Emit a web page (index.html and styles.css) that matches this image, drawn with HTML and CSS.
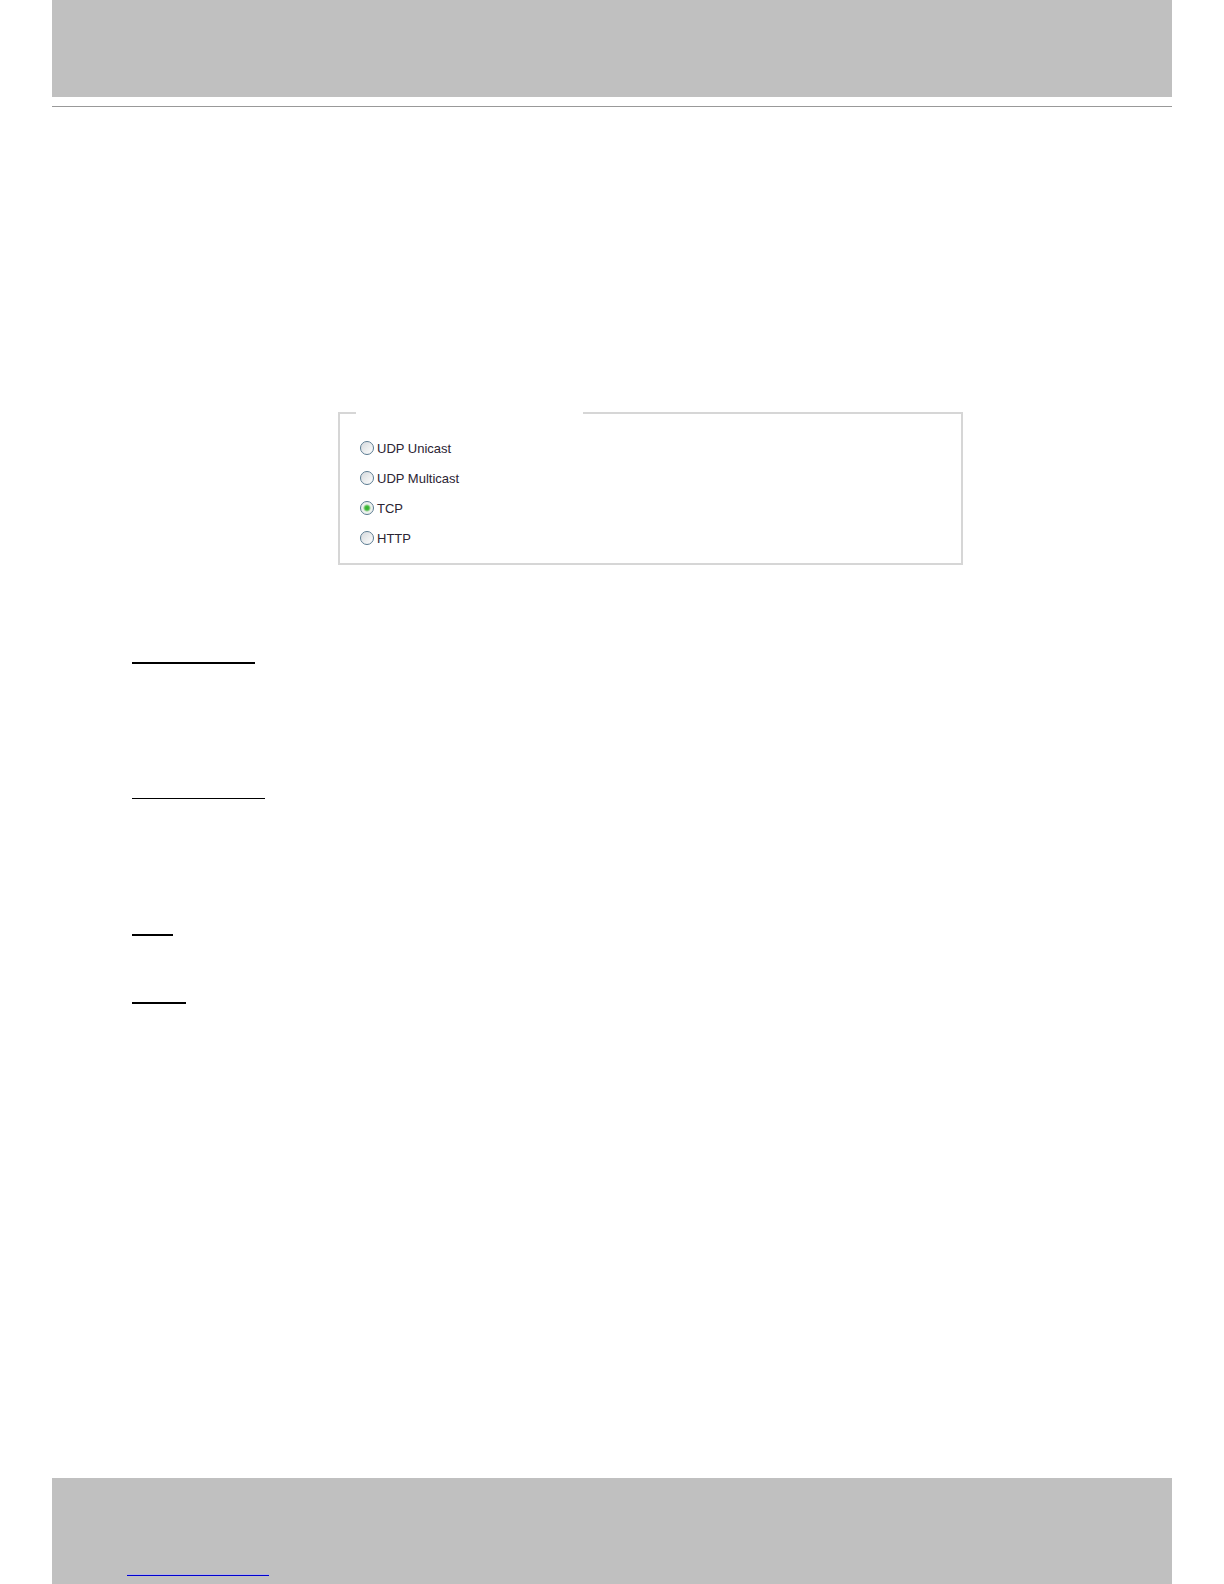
FILE: index.html
```html
<!DOCTYPE html>
<html lang="en">
<head>
<meta charset="utf-8">
<meta name="viewport" content="width=device-width, initial-scale=1">
<title>UDP Unicast, UDP Multicast, TCP, HTTP</title>
<link rel="stylesheet" href="styles.css">
</head>
<body>
<div class="page">
  <header class="band"></header>
  <main class="content">
    <form>
      <fieldset class="protocols">
        <legend class="caption"></legend>
        <label class="option"><input class="radio" type="radio" name="protocol" value="unicast">UDP Unicast</label>
        <label class="option"><input class="radio" type="radio" name="protocol" value="multicast">UDP Multicast</label>
        <label class="option"><input class="radio" type="radio" name="protocol" value="tcp" checked>TCP</label>
        <label class="option"><input class="radio" type="radio" name="protocol" value="http">HTTP</label>
      </fieldset>
    </form>
    <section class="topic"><div class="rule rule-unicast"></div></section>
    <section class="topic"><div class="rule rule-multicast"></div></section>
    <section class="topic topic-short"><div class="rule rule-tcp"></div></section>
    <section class="topic"><div class="rule rule-http"></div></section>
  </main>
  <footer class="foot"><div class="link-rule"></div></footer>
</div>
</body>
</html>
```
FILE: styles.css
```css
* {
  box-sizing: border-box;
}

body {
  margin: 0;
  background: #fff;
  color: #2b2433;
  font: 13px/20px "Liberation Sans", Arial, sans-serif;
}

.page {
  display: flex;
  flex-direction: column;
  min-height: 100vh;
  padding: 0 52px;
}

.band {
  height: 97px;
  background: #c0c0c0;
}

.content {
  flex: 1;
  margin-top: 9px;
  padding: 305px 80px 0;
  border-top: 1px solid #999;
}

.protocols {
  display: flex;
  flex-direction: column;
  gap: 10px;
  max-width: 625px;
  min-width: 0;
  margin: 0 0 97px 206px;
  padding: 25px 20px 14px;
  border: 2px solid #d6d6d6;
}

.caption {
  width: 227px;
  max-width: 100%;
  height: 2px;
  margin-left: -4px;
  padding: 0;
}

.option {
  display: flex;
  align-items: center;
  gap: 3px;
}

.radio {
  appearance: none;
  flex: none;
  width: 14px;
  height: 14px;
  margin: 0 0 2px;
  border: 1px solid #58798f;
  border-radius: 50%;
  background: linear-gradient(135deg, #d5d9dc, #fff) padding-box;
}

.radio:checked {
  background: radial-gradient(circle, #2fae28 0, #45b93f 2px, #edf1ed 4px) padding-box;
}

.topic {
  height: 136px;
}

.topic-short {
  height: 68px;
}

.rule {
  height: 2px;
  background: #000;
}

.rule-unicast {
  width: 123px;
}

.rule-multicast {
  width: 133px;
  height: 1px;
}

.rule-tcp {
  width: 41px;
}

.rule-http {
  width: 54px;
}

.foot {
  height: 106px;
  padding: 96px 75px 0;
  background: #c0c0c0;
}

.link-rule {
  width: 142px;
  height: 2px;
  border-top: 1px solid #b4b4e0;
  background: #0000d0;
}
```
